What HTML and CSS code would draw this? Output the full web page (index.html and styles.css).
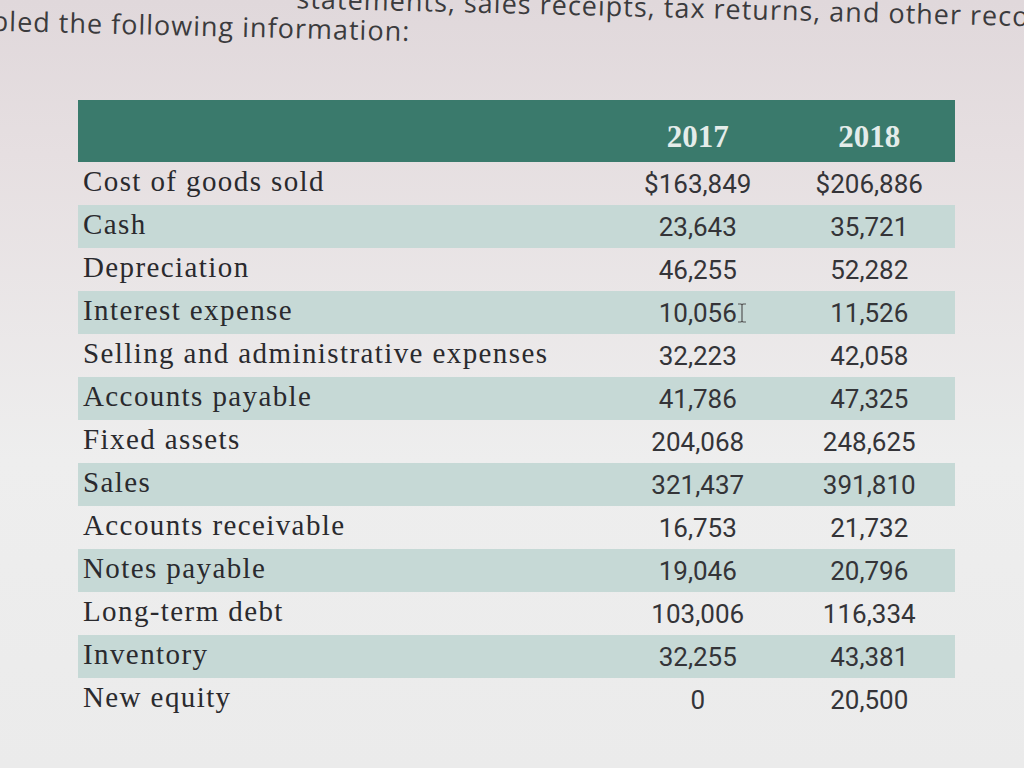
FILE: index.html
```html
<!DOCTYPE html>
<html lang="en">
<head>
<meta charset="utf-8">
<title>Financial information</title>
<link rel="stylesheet" href="styles.css">
</head>
<body>
<div class="page">
  <div class="intro">
    <p class="line line-1">statements, sales receipts, tax returns, and other records</p>
    <p class="line line-2">assembled the following information:</p>
  </div>

  <table class="fin">
    <thead>
      <tr>
        <th class="lbl"></th>
        <th class="yr">2017</th>
        <th class="yr">2018</th>
      </tr>
    </thead>
    <tbody>
      <tr><td class="lbl">Cost of goods sold</td><td class="num">$163,849</td><td class="num">$206,886</td></tr>
      <tr class="alt"><td class="lbl">Cash</td><td class="num">23,643</td><td class="num">35,721</td></tr>
      <tr><td class="lbl">Depreciation</td><td class="num">46,255</td><td class="num">52,282</td></tr>
      <tr class="alt"><td class="lbl">Interest expense</td><td class="num">10,056</td><td class="num">11,526</td></tr>
      <tr><td class="lbl">Selling and administrative expenses</td><td class="num">32,223</td><td class="num">42,058</td></tr>
      <tr class="alt"><td class="lbl">Accounts payable</td><td class="num">41,786</td><td class="num">47,325</td></tr>
      <tr><td class="lbl">Fixed assets</td><td class="num">204,068</td><td class="num">248,625</td></tr>
      <tr class="alt"><td class="lbl">Sales</td><td class="num">321,437</td><td class="num">391,810</td></tr>
      <tr><td class="lbl">Accounts receivable</td><td class="num">16,753</td><td class="num">21,732</td></tr>
      <tr class="alt"><td class="lbl">Notes payable</td><td class="num">19,046</td><td class="num">20,796</td></tr>
      <tr><td class="lbl">Long-term debt</td><td class="num">103,006</td><td class="num">116,334</td></tr>
      <tr class="alt"><td class="lbl">Inventory</td><td class="num">32,255</td><td class="num">43,381</td></tr>
      <tr><td class="lbl">New equity</td><td class="num">0</td><td class="num">20,500</td></tr>
    </tbody>
  </table>

  <svg class="cursor" width="10" height="20" viewBox="0 0 10 20" aria-hidden="true">
    <path d="M1 1h3l1 1 1-1h3M5 2v16M1 19h3l1-1 1 1h3" fill="none" stroke="#555" stroke-width="1.2"/>
  </svg>
</div>
</body>
</html>
```

FILE: styles.css
```css
html, body {
  margin: 0;
  padding: 0;
}

body {
  width: 1024px;
  height: 768px;
  overflow: hidden;
  background: linear-gradient(180deg, #e0d8db 0%, #e6dfe1 20%, #eeeeee 60%, #ebebeb 100%);
}

.page {
  position: relative;
  width: 1024px;
  height: 768px;
  overflow: hidden;
}

.intro {
  font-family: "Open Sans", "Liberation Sans", sans-serif;
  font-size: 27px;
  letter-spacing: 1px;
  color: #3b3b3d;
  white-space: nowrap;
  transform: rotate(1.4deg);
  transform-origin: 0 0;
}

.line {
  margin: 0;
  line-height: 30px;
}

.line-1 {
  margin-top: -24px;
  margin-left: 297px;
}

.line-2 {
  margin-top: 0;
  margin-left: -93px;
}

.fin {
  border-collapse: collapse;
  margin-top: 64px;
  margin-left: 78px;
  width: 877px;
  table-layout: fixed;
}

.fin th.lbl {
  width: 532px;
}

.fin thead tr {
  background: #3a7a6c;
  height: 62px;
}

.fin th.yr {
  font-family: "Liberation Serif", "DejaVu Serif", serif;
  font-weight: bold;
  font-size: 31px;
  color: #e4ecea;
  text-align: center;
  vertical-align: bottom;
  padding: 0 0 7px;
  line-height: 36px;
}

.fin tbody tr {
  height: 43px;
}

.fin tbody tr.alt {
  background: #c6d9d6;
}

.fin td {
  padding: 0;
  vertical-align: middle;
}

.fin td.lbl {
  font-family: "Liberation Serif", "Times New Roman", serif;
  font-size: 29px;
  letter-spacing: 1.4px;
  line-height: 34px;
  color: #2a2a2e;
  padding-left: 5px;
  padding-bottom: 6px;
  white-space: nowrap;
}

.fin td.num {
  font-family: "Roboto", "Liberation Sans", sans-serif;
  font-size: 26px;
  line-height: 30px;
  color: #343438;
  text-align: center;
}

.cursor {
  position: absolute;
  left: 737px;
  top: 303px;
}
```
